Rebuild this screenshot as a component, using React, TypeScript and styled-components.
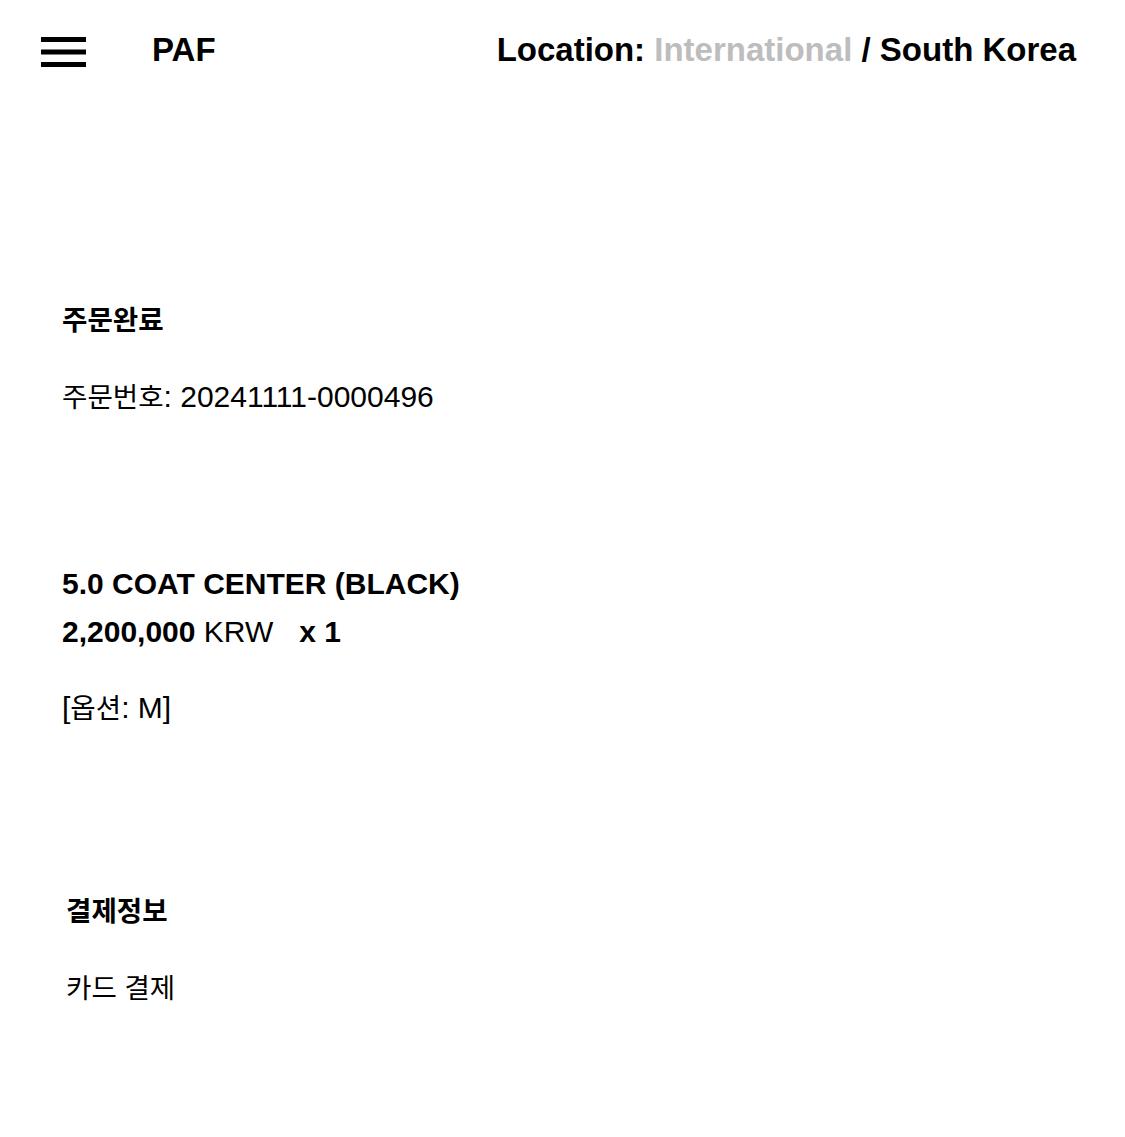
import React from 'react'
import styled, { createGlobalStyle } from 'styled-components'

const GlobalStyle = createGlobalStyle`
  html, body {
    margin: 0;
    padding: 0;
    background: #ffffff;
  }
  body {
    font-family: "Liberation Sans", Arial, "Noto Sans CJK KR", sans-serif;
    color: #000;
  }
`

const Header = styled.header`
  height: 100px;
  display: flex;
  align-items: center;
  padding: 0 49px 0 41px;
  box-sizing: border-box;
`

const MenuButton = styled.button`
  display: flex;
  align-items: center;
  background: none;
  border: 0;
  padding: 0;
  margin: 4px 66px 0 0;
  cursor: pointer;
`

const Logo = styled.div`
  font-size: 33px;
  font-weight: 700;
`

const Location = styled.div`
  margin-left: auto;
  font-size: 33px;
  font-weight: 700;
`

const Muted = styled.span`
  color: #bdbdbd;
`

const Main = styled.main`
  padding: 201px 0 120px 62px;
`

const Section = styled.section<{ $gap: number; $indent?: number }>`
  margin-bottom: ${p => p.$gap}px;
  padding-left: ${p => p.$indent || 0}px;
`

const Heading = styled.h2`
  margin: 0 0 38px;
  font-size: 30px;
  line-height: 38px;
  font-weight: 700;
`

const Text = styled.p`
  margin: 0;
  font-size: 30px;
  line-height: 38px;
  font-weight: 400;
`

const Ko = styled.span`
  font-size: 0.92em;
`

const ProductLine = styled.div`
  font-size: 30px;
  line-height: 48px;
  font-weight: 700;
`

const Regular = styled.span`
  font-weight: 400;
`

const Qty = styled.span`
  margin-left: 26px;
  font-weight: 700;
`

const OptionText = styled(Text)`
  margin-top: 33px;
`

const HamburgerIcon = () => (
  <svg width="45" height="30" viewBox="0 0 45 30">
    <rect x="0" y="0" width="45" height="5" fill="#000" />
    <rect x="0" y="12.5" width="45" height="5" fill="#000" />
    <rect x="0" y="25" width="45" height="5" fill="#000" />
  </svg>
)

export default function App() {
  return (
    <>
      <GlobalStyle />
      <Header>
        <MenuButton aria-label="menu">
          <HamburgerIcon />
        </MenuButton>
        <Logo>PAF</Logo>
        <Location>
          Location: <Muted>International</Muted> / South Korea
        </Location>
      </Header>
      <Main>
        <Section $gap={143}>
          <Heading><Ko>주문완료</Ko></Heading>
          <Text><Ko>주문번호</Ko>: 20241111-0000496</Text>
        </Section>
        <Section $gap={164}>
          <ProductLine>5.0 COAT CENTER (BLACK)</ProductLine>
          <ProductLine>
            2,200,000 <Regular>KRW</Regular>
            <Qty>x 1</Qty>
          </ProductLine>
          <OptionText>[<Ko>옵션</Ko>: M]</OptionText>
        </Section>
        <Section $gap={0} $indent={4}>
          <Heading><Ko>결제정보</Ko></Heading>
          <Text><Ko>카드 결제</Ko></Text>
        </Section>
      </Main>
    </>
  )
}
